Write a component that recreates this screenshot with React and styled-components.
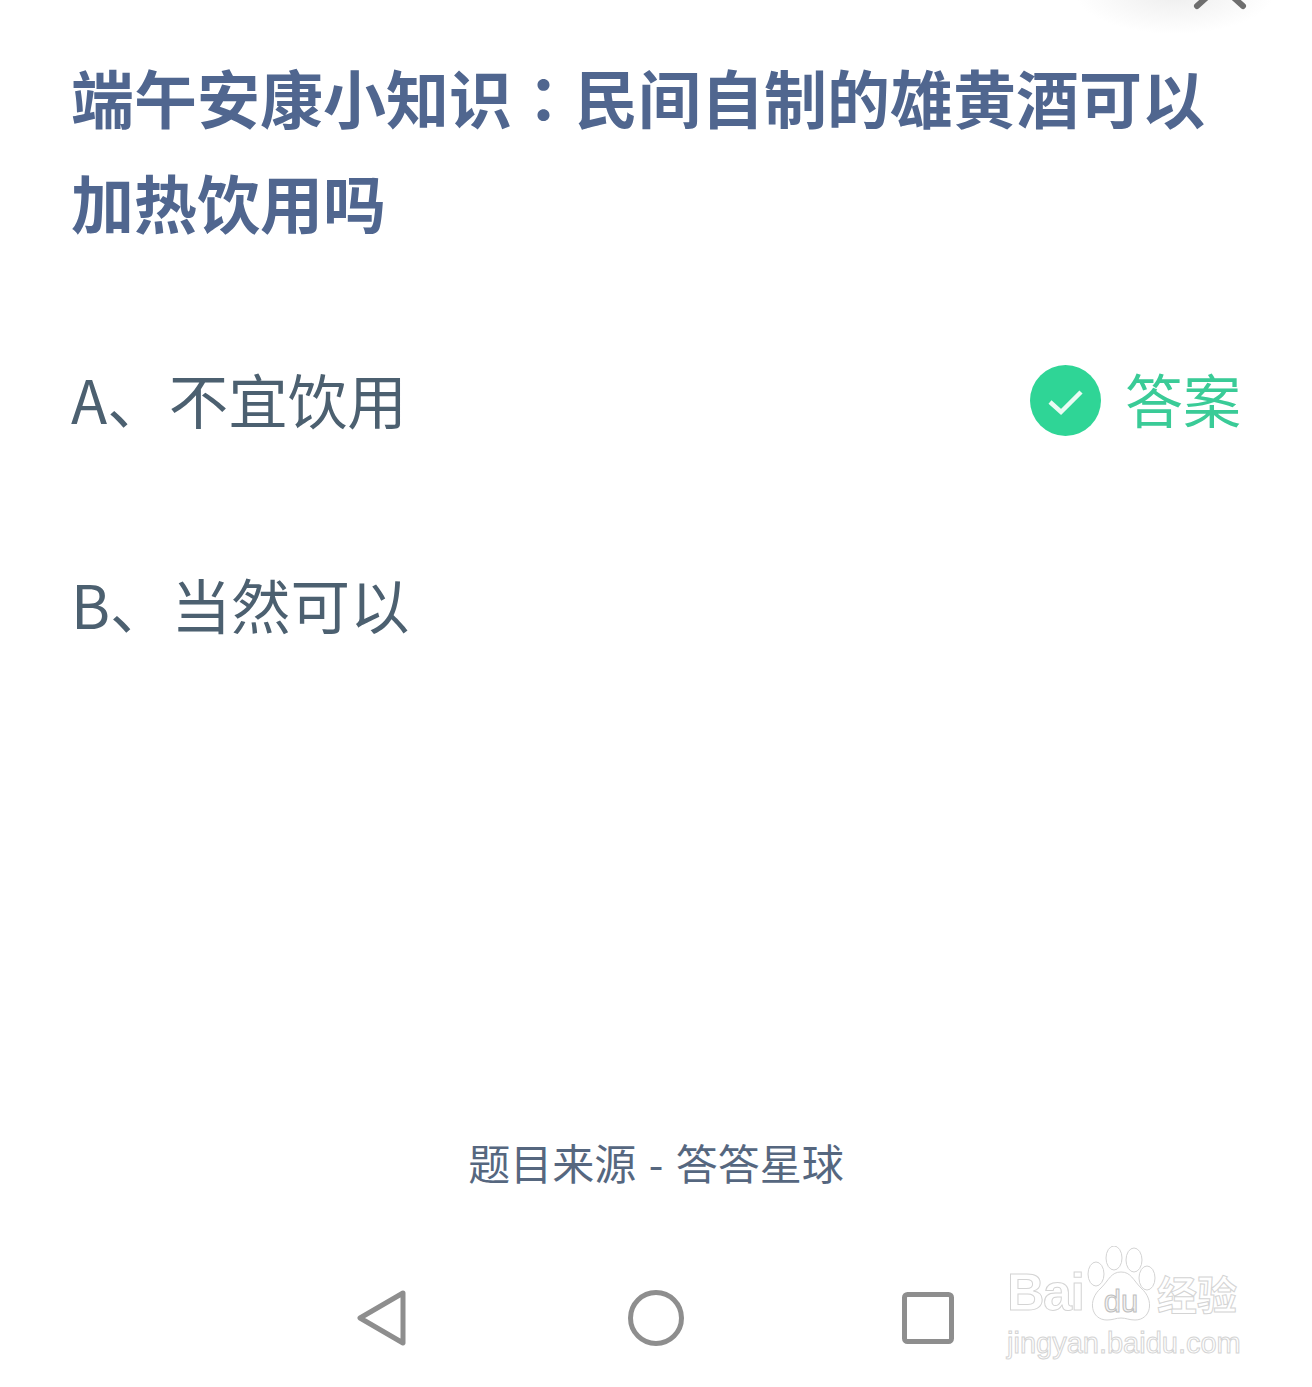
import styled, { createGlobalStyle } from "styled-components";

const GlobalStyle = createGlobalStyle`
    html, body {
        margin: 0;
        padding: 0;
        background: #FFFFFF;
    }
    * {
        box-sizing: border-box;
    }
`

const options = [
    { id: "A", text: "不宜饮用", correct: true },
    { id: "B", text: "当然可以", correct: false },
];

export default function App() {
    return (
        <>
            <GlobalStyle />
            <Page>
                <CloseGlow />
                <CloseIcon viewBox="0 0 60 12">
                    <path d="M7 6 L17 -3 M53 6 L43 -3" />
                </CloseIcon>
                <Title>端午安康小知识<Colon>：</Colon>民间自制的雄黄酒可以<br />加热饮用吗</Title>
                <OptionList>
                    {options.map(o =>
                        <Option key={o.id}>
                            <OptionLabel>{o.id}<Mark>、</Mark>{o.text}</OptionLabel>
                            {o.correct && (
                                <Answer>
                                    <CheckIcon viewBox="0 0 71 71">
                                        <circle cx="35.5" cy="35.5" r="35.5" fill="#2FD596" />
                                        <path d="M20 37 L31 47 L51 27" fill="none" stroke="#E9FBF3" strokeWidth="4.5" />
                                    </CheckIcon>
                                    答案
                                </Answer>
                            )}
                        </Option>
                    )}
                </OptionList>
                <Source>题目来源 - 答答星球</Source>
                <NavBar>
                    <NavIcon width="49" height="56" viewBox="0 0 49 56">
                        <path d="M46 3 L3 28 L46 53 Z" strokeLinejoin="round" />
                    </NavIcon>
                    <NavIcon width="56" height="56" viewBox="0 0 56 56">
                        <circle cx="28" cy="28" r="25.5" />
                    </NavIcon>
                    <NavIcon width="52" height="52" viewBox="0 0 52 52">
                        <rect x="2.5" y="2.5" width="47" height="47" rx="3" />
                    </NavIcon>
                </NavBar>
                <Watermark>
                    <BrandRow>
                        <BrandText>Bai</BrandText>
                        <Paw viewBox="0 0 72 76">
                            <ellipse cx="29" cy="12" rx="8" ry="12" />
                            <ellipse cx="49" cy="14" rx="8" ry="12" />
                            <ellipse cx="11" cy="28" rx="8" ry="12" />
                            <ellipse cx="62" cy="32" rx="8" ry="12" />
                            <path d="M36 26 C46 26 48 34 56 42 C70 54 66 74 50 74 C44 74 41 72 36 72 C31 72 28 74 22 74 C6 74 2 54 16 42 C24 34 26 26 36 26 Z" />
                            <PawText x="36" y="66">du</PawText>
                        </Paw>
                        <BrandCjk>经验</BrandCjk>
                    </BrandRow>
                    <BrandUrl>jingyan.baidu.com</BrandUrl>
                </Watermark>
            </Page>
        </>
    )
}

const Page = styled.div`
    position: relative;
    width: 1312px;
    height: 1387px;
    overflow: hidden;
    display: flex;
    flex-direction: column;
    background: #FFFFFF;
    font-family: "Noto Sans CJK SC", "Noto Sans", sans-serif;
`
const CloseGlow = styled.div`
    position: absolute;
    top: -50px;
    left: 1075px;
    width: 200px;
    height: 84px;
    border-radius: 50%;
    background: radial-gradient(closest-side, #EDEDED 0%, #F7F7F7 55%, rgba(255, 255, 255, 0) 100%);
`
const CloseIcon = styled.svg`
    position: absolute;
    top: 0;
    left: 1190px;
    width: 60px;
    height: 12px;
    path {
        fill: none;
        stroke: #6E6E6E;
        stroke-width: 6;
        stroke-linecap: round;
    }
`
const Title = styled.h1`
    margin: 43px 0 0;
    padding: 0 72px 0 71px;
    width: 1280px;
    font-size: 63px;
    line-height: 105px;
    font-weight: 700;
    color: #50668F;
`
const Colon = styled.span`
    font-family: "Noto Sans CJK TC", sans-serif;
`
const OptionList = styled.div`
    margin-top: 42px;
    padding: 0 71px;
    display: flex;
    flex-direction: column;
`
const Option = styled.div`
    height: 205px;
    display: flex;
    justify-content: space-between;
    align-items: center;
    font-size: 58px;
    font-weight: 400;
    color: #4C6070;
`
const OptionLabel = styled.span`
    font-size: 59.5px;
    white-space: nowrap;
`
const Mark = styled.span`
    margin-right: 2px;
`
const Answer = styled.div`
    display: flex;
    align-items: center;
    gap: 24px;
    color: #3ACB97;
`
const CheckIcon = styled.svg`
    width: 71px;
    height: 71px;
    margin-top: 5px;
`
const Source = styled.div`
    position: absolute;
    left: 0;
    right: 0;
    top: 1132px;
    text-align: center;
    font-size: 42px;
    line-height: 60px;
    font-weight: 400;
    word-spacing: 3px;
    color: #56677F;
`
const NavBar = styled.div`
    margin-top: auto;
    height: 97px;
    padding-left: 357px;
    display: flex;
    align-items: center;
    gap: 218px;
    padding-bottom: 41px;
    svg:first-child {
        margin-right: 4px;
    }
`
const NavIcon = styled.svg`
    flex: none;
    fill: none;
    stroke: #8E8E8E;
    stroke-width: 5;
`
const Watermark = styled.div`
    position: absolute;
    left: 1007px;
    top: 1246px;
    width: 240px;
    font-family: "Liberation Sans", sans-serif;
    color: #FFFFFF;
    -webkit-text-stroke: 1px #D4D4D4;
`
const BrandRow = styled.div`
    display: flex;
    align-items: flex-end;
    height: 76px;
`
const BrandText = styled.span`
    flex: none;
    width: 78px;
    font-size: 52px;
    line-height: 60px;
    font-weight: 700;
    letter-spacing: -1.5px;
`
const Paw = styled.svg`
    flex: none;
    width: 72px;
    height: 76px;
    fill: #FFFFFF;
    stroke: #D4D4D4;
    stroke-width: 1;
`
const PawText = styled.text`
    font-size: 31px;
    font-weight: 400;
    text-anchor: middle;
    fill: #F2F2F2;
    stroke: #BEBEBE;
    -webkit-text-stroke: 0;
`
const BrandCjk = styled.span`
    font-family: "Noto Sans CJK SC", sans-serif;
    font-size: 40px;
    line-height: 58px;
    font-weight: 700;
`
const BrandUrl = styled.div`
    margin-top: 4px;
    font-size: 29px;
    line-height: 34px;
    white-space: nowrap;
`
